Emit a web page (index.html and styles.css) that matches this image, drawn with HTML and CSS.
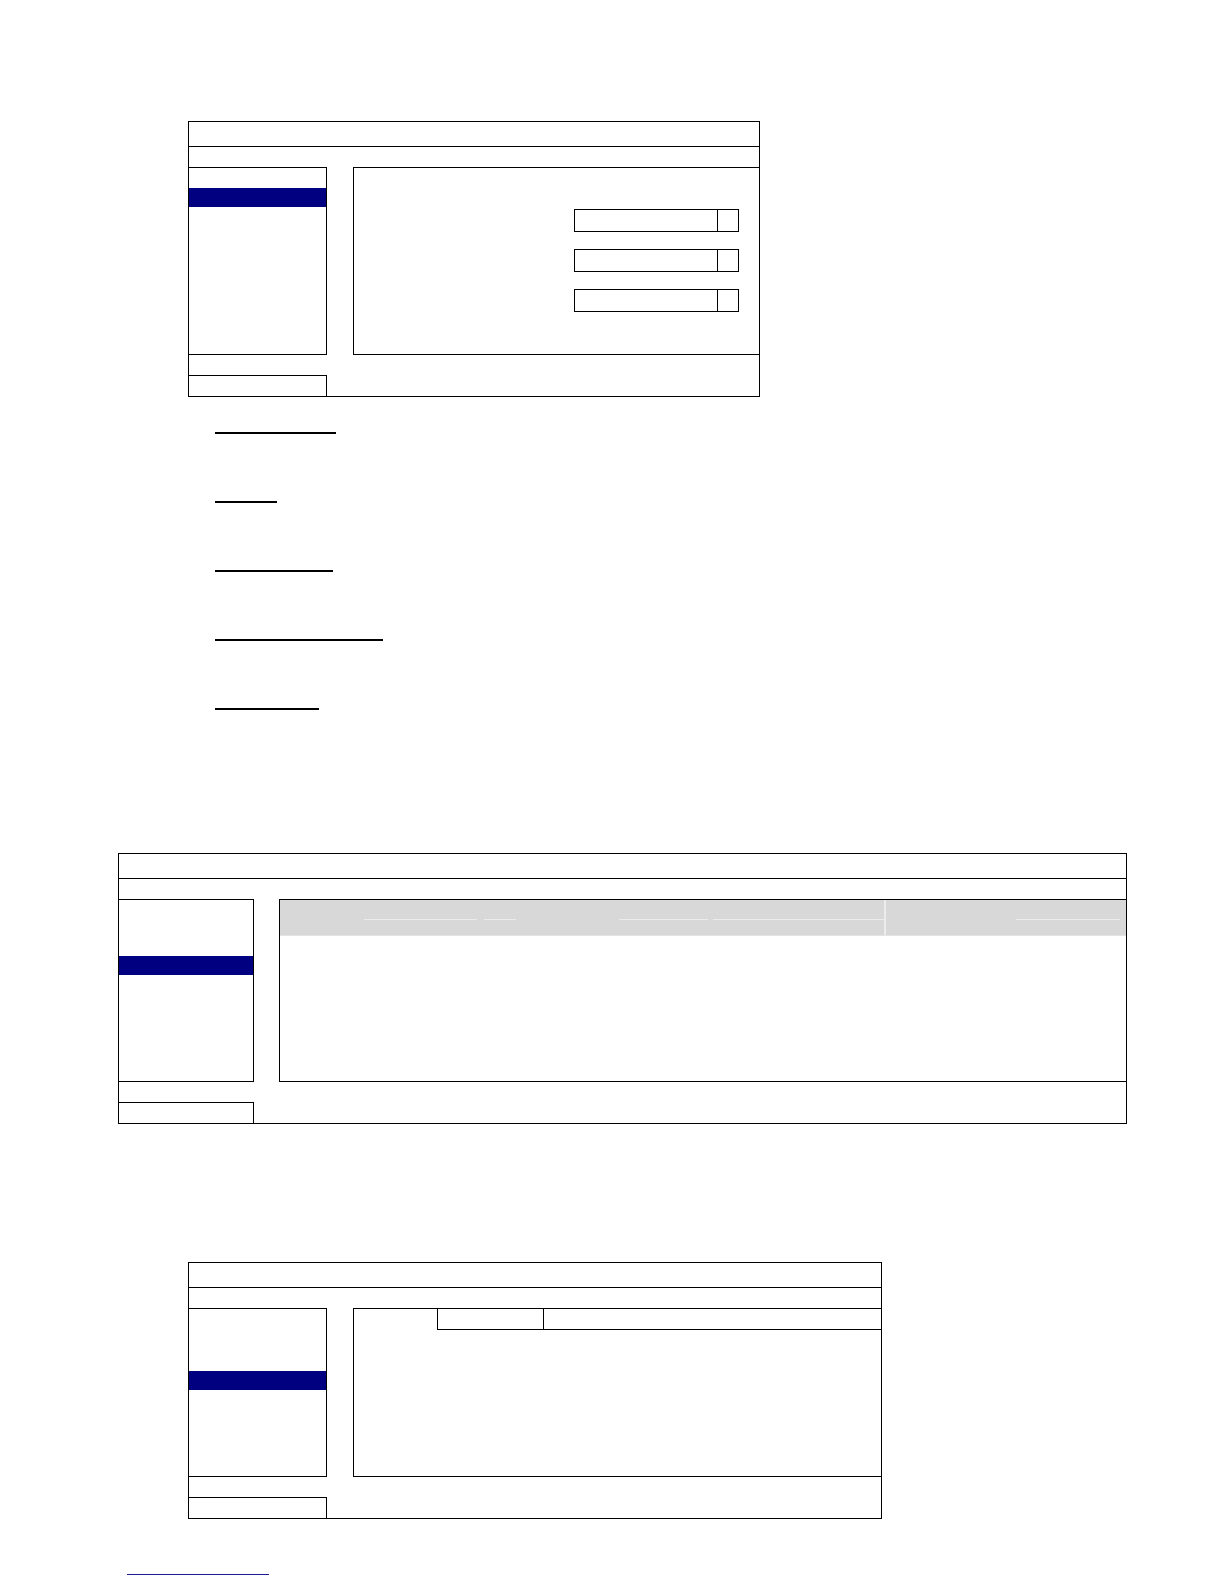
FILE: index.html
```html
<!DOCTYPE html>
<html lang="en">
<head>
<meta charset="utf-8">
<title>Menu screens</title>
<link rel="stylesheet" href="styles.css">
</head>
<body>
<div class="page">

  <div class="dlg dlg-a">
    <div class="dlg-title"></div>
    <div class="dlg-body">
      <div class="list list-a"><div class="sel"></div></div>
      <div class="panel panel-a">
        <div class="dd"><div class="dd-val"></div><div class="dd-btn"></div></div>
        <div class="dd"><div class="dd-val"></div><div class="dd-btn"></div></div>
        <div class="dd"><div class="dd-val"></div><div class="dd-btn"></div></div>
      </div>
    </div>
    <div class="dlg-foot"><div class="btn btn-a"></div></div>
  </div>

  <div class="notes">
    <div class="u u1"></div>
    <div class="u u2"></div>
    <div class="u u3"></div>
    <div class="u u4"></div>
    <div class="u u5"></div>
  </div>

  <div class="dlg dlg-b">
    <div class="dlg-title"></div>
    <div class="dlg-body">
      <div class="list list-b"><div class="sel"></div></div>
      <div class="panel panel-b">
        <div class="thead">
          <div class="th th1"></div>
          <div class="th th2 ln"></div>
          <div class="th th3"></div>
          <div class="th th4 ln"></div>
          <div class="th th5"></div>
          <div class="th th6 ln"></div>
          <div class="th th7"></div>
          <div class="th th8 ln"></div>
          <div class="th th9"></div>
          <div class="th th10 ln"></div>
          <div class="th th11"></div>
        </div>
      </div>
    </div>
    <div class="dlg-foot"><div class="btn btn-b"></div></div>
  </div>

  <div class="dlg dlg-c">
    <div class="dlg-title"></div>
    <div class="dlg-body">
      <div class="list list-c"><div class="sel"></div></div>
      <div class="panel panel-c">
        <div class="tabs">
          <div class="tab tab-on"></div>
          <div class="tab tab-mid"></div>
          <div class="tab tab-rest"></div>
        </div>
      </div>
    </div>
    <div class="dlg-foot"><div class="btn btn-c"></div></div>
  </div>

  <div class="link"></div>
</div>
</body>
</html>
```

FILE: styles.css
```css
*, *::before, *::after { box-sizing: border-box; }

html, body {
  margin: 0;
  padding: 0;
  background: #ffffff;
  font-family: "Liberation Sans", Arial, sans-serif;
}

.page {
  width: 1224px;
  min-height: 1584px;
  padding-top: 121px;
}

/* ---------- generic dialog ---------- */
.dlg {
  border: 1px solid #000;
  background: #fff;
}
.dlg-title {
  height: 25px;
  border-bottom: 1px solid #000;
}
.dlg-body {
  display: flex;
  padding-top: 20px;
}
.list {
  border: 1px solid #000;
  border-left: 0;
  flex: none;
}
.sel {
  height: 19px;
  background: #000080;
}
.panel {
  flex: 1;
  border: 1px solid #000;
  border-right: 0;
}
.dlg-foot {
  padding-top: 20px;
}
.btn {
  height: 21px;
  border-top: 1px solid #000;
  border-right: 1px solid #000;
}

/* ---------- dialog A ---------- */
.dlg-a {
  margin-left: 188px;
  width: 572px;
}
.list-a { width: 138px; height: 188px; padding-top: 20px; }
.btn-a { width: 138px; }
.panel-a {
  margin-left: 26px;
  display: flex;
  flex-direction: column;
  align-items: flex-end;
  gap: 17px;
  padding-top: 41px;
  padding-right: 20px;
}
.dd {
  width: 165px;
  height: 23px;
  border: 1px solid #000;
  display: flex;
}
.dd-val { flex: 1; }
.dd-btn {
  width: 21px;
  border-left: 1px solid #000;
}

/* ---------- underlined headings ---------- */
.notes {
  margin-left: 215px;
  padding-top: 35px;
}
.u {
  height: 2px;
  background: #000;
  margin-bottom: 67px;
}
.u5 { margin-bottom: 0; }
.u1 { width: 121px; }
.u2 { width: 62px; }
.u3 { width: 118px; }
.u4 { width: 168px; }
.u5 { width: 104px; }

/* ---------- dialog B ---------- */
.dlg-b {
  margin-top: 143px;
  margin-left: 118px;
  width: 1009px;
}
.list-b { width: 135px; height: 183px; padding-top: 56px; }
.btn-b { width: 135px; }
.panel-b { margin-left: 25px; }
.thead {
  display: flex;
  height: 36px;
  background: #d8d8d8;
}
.th {
  flex: none;
  height: 36px;
  border-bottom: 1px solid #e3e3e3;
}
.ln {
  background: linear-gradient(#ececec, #ececec) 0 19px / 100% 1px no-repeat;
}
.th1 { width: 84px; }
.th2 { width: 113px; }
.th3 { width: 7px; }
.th4 { width: 32px; }
.th5 { width: 103px; }
.th6 { width: 89px; }
.th7 { width: 5px; }
.th8 { width: 173px; border-right: 2px solid #ececec; }
.th9 { width: 130px; }
.th10 { width: 104px; }
.th11 { flex: 1; }

/* ---------- dialog C ---------- */
.dlg-c {
  margin-top: 138px;
  margin-left: 188px;
  width: 694px;
}
.list-c { width: 138px; height: 169px; padding-top: 62px; }
.btn-c { width: 138px; }
.panel-c { margin-left: 26px; }
.tabs {
  display: flex;
  height: 21px;
}
.tab-on { width: 83px; }
.tab-mid {
  width: 107px;
  border-left: 1px solid #000;
  border-right: 1px solid #000;
  border-bottom: 1px solid #000;
}
.tab-rest {
  flex: 1;
  border-bottom: 1px solid #000;
}

/* ---------- footer link line ---------- */
.link {
  margin-top: 55px;
  margin-left: 127px;
  width: 142px;
  height: 1px;
  background: #1c1c96;
}
```
